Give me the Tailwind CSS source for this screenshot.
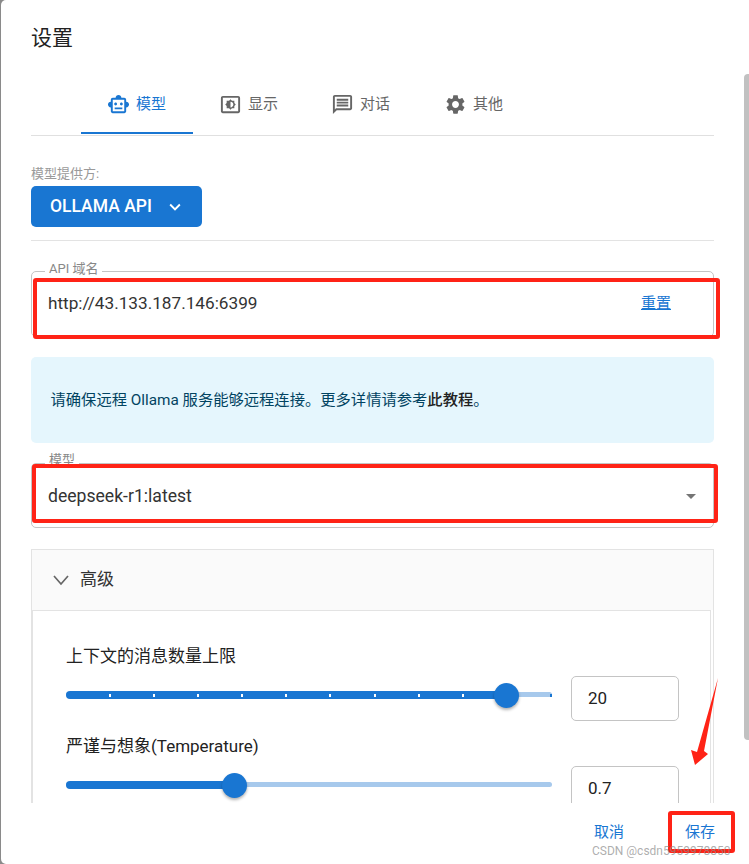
<!DOCTYPE html>
<html lang="en">
<head>
    <meta charset="UTF-8">
    <title>设置</title>
    <script src="https://cdn.jsdelivr.net/npm/@tailwindcss/browser@4"></script>
</head>
<body class="bg-[#8a8a8a] overflow-hidden font-['Roboto','Noto_Sans_CJK_SC',sans-serif]">
    <div class="relative w-[748px] h-[864px] bg-white rounded-l-[5px] ml-[1px] flex flex-col overflow-hidden">
        <div class="shrink-0 pl-[30px] pr-[35px]">
            <h2 class="h-[75px] pt-[23px] text-[21px] leading-[30px] text-[#222]">设置</h2>
            <div class="h-[61px] border-b border-[#e0e0e0] pl-[50px] flex">
                <div class="w-[112px] h-[59px] border-b-2 border-[#1976d2] flex items-start gap-[6px] pl-[26px] pt-[18px] text-[15px] leading-[23px] text-[#1976d2]">
                    <svg class="w-[23px] h-[23px] fill-current" viewBox="0 0 24 24"><path d="M20 9V7c0-1.1-.9-2-2-2h-3c0-1.66-1.34-3-3-3S9 3.34 9 5H6c-1.1 0-2 .9-2 2v2c-1.66 0-3 1.34-3 3s1.34 3 3 3v4c0 1.1.9 2 2 2h12c1.1 0 2-.9 2-2v-4c1.66 0 3-1.34 3-3s-1.34-3-3-3zm-2 10H6V7h12v12zm-9-6c-.83 0-1.5-.67-1.5-1.5S8.17 10 9 10s1.5.67 1.5 1.5S9.83 13 9 13zm7.5-1.5c0 .83-.67 1.5-1.5 1.5s-1.5-.67-1.5-1.5.67-1.5 1.5-1.5 1.5.67 1.5 1.5zM8 15h8v2H8v-2z"/></svg>
                    模型
                </div>
                <div class="w-[112px] flex items-start gap-[6px] pl-[26px] pt-[18px] text-[15px] leading-[23px] text-[#666]">
                    <svg class="w-[23px] h-[23px] fill-current" viewBox="0 0 24 24"><path d="M20 3H4c-1.11 0-2 .89-2 2v14c0 1.11.89 2 2 2h16c1.11 0 2-.89 2-2V5c0-1.11-.89-2-2-2zm0 16.02H4V4.98h16v14.04zM8 16h2.5l1.5 1.5 1.5-1.5H16v-2.5l1.5-1.5-1.5-1.5V8h-2.5L12 6.5 10.5 8H8v2.5L6.5 12 8 13.5V16zm4-7c1.66 0 3 1.34 3 3s-1.34 3-3 3V9z"/></svg>
                    显示
                </div>
                <div class="w-[113px] flex items-start gap-[6px] pl-[26px] pt-[18px] text-[15px] leading-[23px] text-[#666]">
                    <svg class="w-[23px] h-[23px] fill-current" viewBox="0 0 24 24"><path d="M20 2H4c-1.1 0-1.99.9-1.99 2L2 22l4-4h14c1.1 0 2-.9 2-2V4c0-1.1-.9-2-2-2zm0 14H5.17L4 17.17V4h16v12zM6 12h12v2H6zm0-3h12v2H6zm0-3h12v2H6z"/></svg>
                    对话
                </div>
                <div class="w-[113px] flex items-start gap-[6px] pl-[26px] pt-[18px] text-[15px] leading-[23px] text-[#666]">
                    <svg class="w-[23px] h-[23px] fill-current" viewBox="0 0 24 24"><path d="M19.14 12.94c.04-.3.06-.61.06-.94 0-.32-.02-.64-.07-.94l2.03-1.58c.18-.14.23-.41.12-.61l-1.92-3.32c-.12-.22-.37-.29-.59-.22l-2.39.96c-.5-.38-1.03-.7-1.62-.94l-.36-2.54c-.04-.24-.24-.41-.48-.41h-3.84c-.24 0-.43.17-.47.41l-.36 2.54c-.59.24-1.13.57-1.62.94l-2.39-.96c-.22-.08-.47 0-.59.22L2.74 8.87c-.12.21-.08.47.12.61l2.03 1.58c-.05.3-.09.63-.09.94s.02.64.07.94l-2.03 1.58c-.18.14-.23.41-.12.61l1.92 3.32c.12.22.37.29.59.22l2.39-.96c.5.38 1.03.7 1.62.94l.36 2.54c.05.24.24.41.48.41h3.84c.24 0 .44-.17.47-.41l.36-2.54c.59-.24 1.13-.56 1.62-.94l2.39.96c.22.08.47 0 .59-.22l1.92-3.32c.12-.22.07-.47-.12-.61l-2.01-1.58zM12 15.6c-1.98 0-3.6-1.62-3.6-3.6s1.62-3.6 3.6-3.6 3.6 1.62 3.6 3.6-1.62 3.6-3.6 3.6z"/></svg>
                    其他
                </div>
            </div>
        </div>

        <div class="flex-1 min-h-0 overflow-hidden pl-[30px] pr-[35px]">
            <p class="mt-[29px] text-[13px] leading-[18px] text-[#9a9a9a]">模型提供方:</p>
            <button class="mt-[3px] w-[171px] h-[41px] bg-[#1976d2] rounded-[5px] text-white text-[17.5px] font-medium flex items-center pl-[19px]">
                OLLAMA API
                <svg class="w-[22px] h-[22px] ml-[12px] fill-current" viewBox="0 0 24 24"><path d="M7.41 8.59 12 13.17l4.59-4.58L18 10l-6 6-6-6z"/></svg>
            </button>
            <div class="mt-[13px] border-t border-[#e3e3e3]"></div>

            <div class="relative mt-[30px] h-[66px] border border-[#c4c4c4] rounded-[5px] flex items-start justify-between pl-[16px] pr-[42px] pt-[19px] text-[17.2px] leading-6 text-[#333]">
                <span class="absolute left-[13px] -top-[12px] bg-white px-[4px] text-[13px] leading-[18px] text-[#888]">API 域名</span>
                http://43.133.187.146:6399
                <a class="text-[15px] text-[#1976d2] underline">重置</a>
            </div>

            <div class="mt-[20px] h-[86px] bg-[#e5f6fd] rounded-[5px] flex items-center pl-[19.5px] text-[15.3px] text-[#014361]">
                请确保远程 Ollama 服务能够远程连接。更多详情请参考<b class="font-medium text-[#222]">此教程</b>。
            </div>

            <div class="relative mt-[20px] h-[65px] border border-[#c4c4c4] rounded-[5px] flex items-center justify-between pl-[16px] pr-[17px] pt-[1px] text-[17.6px] text-[#333]">
                <span class="absolute left-[13px] -top-[13px] bg-white px-[4px] text-[13px] leading-[18px] text-[#888]">模型</span>
                deepseek-r1:latest
                <span class="w-0 h-0 border-x-[5px] border-x-transparent border-t-[5px] border-t-[#757575]"></span>
            </div>

            <div class="mt-[21px] border border-[#e3e3e3]">
                <div class="h-[60px] bg-[#fafafa] flex items-center gap-[9px] pl-[19px] text-[17px] text-[#333]">
                    <svg class="w-5 h-5" viewBox="0 0 20 20" fill="none" stroke="#666" stroke-width="1.7"><polyline points="3,6 10,14 17,6"/></svg>
                    高级
                </div>
                <div class="mr-[2px] border border-[#e3e3e3] pl-[33px] pr-[31px] pt-[33px] pb-[20px]">
                    <p class="text-[17px] leading-6 text-[#222]">上下文的消息数量上限</p>
                    <div class="mt-[8px] flex items-center gap-[19px]">
                        <div class="relative shrink-0 w-[486px] h-[8px] -mt-[8px]">
                            <div class="absolute inset-x-0 top-[1.5px] h-[5px] rounded-full bg-[#a7c9ec]"></div>
                            <div class="absolute left-0 top-0 h-[8px] w-[441px] rounded-full bg-[#1976d2]"></div>
                            <div class="absolute inset-0 flex justify-between pl-[43px]">
                                <i class="w-[2px] h-[3px] mt-[3px] bg-white"></i><i class="w-[2px] h-[3px] mt-[3px] bg-white"></i><i class="w-[2px] h-[3px] mt-[3px] bg-white"></i><i class="w-[2px] h-[3px] mt-[3px] bg-white"></i><i class="w-[2px] h-[3px] mt-[3px] bg-white"></i><i class="w-[2px] h-[3px] mt-[3px] bg-white"></i><i class="w-[2px] h-[3px] mt-[3px] bg-white"></i><i class="w-[2px] h-[3px] mt-[3px] bg-white"></i><i class="w-[2px] h-[3px] mt-[3px] bg-white"></i><i class="w-[2px] h-[3px] mt-[3px] bg-white"></i><i class="w-[2px] h-[3px] mt-[3px] bg-[#1976d2]"></i>
                            </div>
                            <div class="absolute left-[428px] -top-[8px] w-[25px] h-[25px] rounded-full bg-[#1976d2] shadow-[0_2px_3px_rgba(0,0,0,0.3)]"></div>
                        </div>
                        <div class="shrink-0 w-[108px] h-[45px] border border-[#c4c4c4] rounded-[5px] pl-[16px] flex items-center text-[17px] text-[#222]">20</div>
                    </div>
                    <p class="mt-[13px] text-[17px] leading-6 text-[#222]">严谨与想象(Temperature)</p>
                    <div class="mt-[8px] flex items-center gap-[19px]">
                        <div class="relative shrink-0 w-[486px] h-[8px] -mt-[8px]">
                            <div class="absolute inset-x-0 top-[1.5px] h-[5px] rounded-full bg-[#a7c9ec]"></div>
                            <div class="absolute left-0 top-0 h-[8px] w-[169px] rounded-full bg-[#1976d2]"></div>
                            <div class="absolute left-[156px] -top-[8px] w-[25px] h-[25px] rounded-full bg-[#1976d2] shadow-[0_2px_3px_rgba(0,0,0,0.3)]"></div>
                        </div>
                        <div class="shrink-0 w-[108px] h-[45px] border border-[#c4c4c4] rounded-[5px] pl-[16px] flex items-center text-[17px] text-[#222]">0.7</div>
                    </div>
                </div>
            </div>
        </div>

        <div class="shrink-0 h-[61px] pr-[34px] flex items-start justify-end gap-[61px] pt-[19px] text-[15px] leading-5 text-[#1976d2]">
            <span>取消</span>
            <span>保存</span>
        </div>

        <!-- scrollbar -->
        <div class="absolute left-[743px] top-[74px] w-[5px] h-[666px] bg-[#c1c1c1] rounded-l-[4px]"></div>

        <!-- annotations drawn over the screenshot -->
        <div class="absolute left-[32px] top-[278px] w-[687px] h-[61px] border-[4px] border-[#ff2316] rounded-[3px]"></div>
        <div class="absolute left-[31px] top-[464px] w-[686px] h-[59px] border-[4px] border-[#ff2316] rounded-[3px]"></div>
        <div class="absolute left-[667px] top-[811px] w-[67px] h-[42px] border-[4px] border-[#ff2316] rounded-[3px]"></div>
        <svg class="absolute left-[679px] top-[670px] w-[50px] h-[100px]" viewBox="0 0 50 100"><polygon fill="#ff2316" points="38,8 24,81 28,84 15,95 11,80 17,82"/></svg>
        <span class="absolute left-[591px] top-[843px] text-[12px] leading-4 text-[#8a8a8a]/70">CSDN @csdn5959978850</span>
    </div>
</body>
</html>
